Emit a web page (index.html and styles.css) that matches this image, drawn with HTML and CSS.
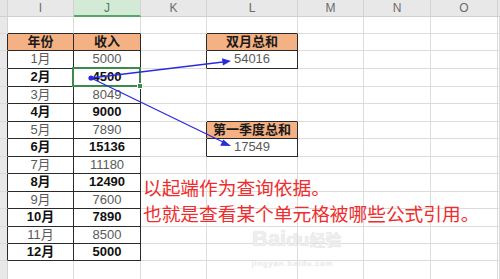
FILE: index.html
```html
<!DOCTYPE html>
<html lang="zh">
<head>
<meta charset="utf-8">
<title>追踪从属单元格</title>
<link rel="stylesheet" href="styles.css">
</head>
<body>
<div class="page">
<div class="sheet">
  <!-- column header row -->
  <div class="ch corner"></div>
  <div class="ch">I</div>
  <div class="ch sel">J</div>
  <div class="ch">K</div>
  <div class="ch">L</div>
  <div class="ch">M</div>
  <div class="ch">N</div>
  <div class="ch">O</div>
  <div class="ch last"></div>

  <!-- row 1 -->
  <div class="rh"></div><div class="c d"></div><div class="c d"></div><div class="c"></div><div class="c d"></div><div class="c"></div><div class="c"></div><div class="c"></div><div class="c"></div>
  <!-- row 2 -->
  <div class="rh r"></div><div class="c t r d hd">年份</div><div class="c t r d hd">收入</div><div class="c r"></div><div class="c r d hd">双月总和</div><div class="c"></div><div class="c"></div><div class="c"></div><div class="c"></div>
  <!-- row 3 -->
  <div class="rh r"></div><div class="c t r d">1月</div><div class="c t r d">5000</div><div class="c r"></div><div class="c r d">54016</div><div class="c"></div><div class="c"></div><div class="c"></div><div class="c"></div>
  <!-- row 4 -->
  <div class="rh r"></div><div class="c t r d b">2月</div><div class="c t r d b active">4500<span class="handle"></span></div><div class="c"></div><div class="c"></div><div class="c"></div><div class="c"></div><div class="c"></div><div class="c"></div>
  <!-- row 5 -->
  <div class="rh r"></div><div class="c t r d">3月</div><div class="c t r d">8049</div><div class="c"></div><div class="c"></div><div class="c"></div><div class="c"></div><div class="c"></div><div class="c"></div>
  <!-- row 6 -->
  <div class="rh r"></div><div class="c t r d b">4月</div><div class="c t r d b">9000</div><div class="c"></div><div class="c d"></div><div class="c"></div><div class="c"></div><div class="c"></div><div class="c"></div>
  <!-- row 7 -->
  <div class="rh r"></div><div class="c t r d">5月</div><div class="c t r d">7890</div><div class="c r"></div><div class="c r d hd">第一季度总和</div><div class="c"></div><div class="c"></div><div class="c"></div><div class="c"></div>
  <!-- row 8 -->
  <div class="rh r"></div><div class="c t r d b">6月</div><div class="c t r d b">15136</div><div class="c r"></div><div class="c r d">17549</div><div class="c"></div><div class="c"></div><div class="c"></div><div class="c"></div>
  <!-- row 9 -->
  <div class="rh r"></div><div class="c t r d">7月</div><div class="c t r d">11180</div><div class="c"></div><div class="c"></div><div class="c"></div><div class="c"></div><div class="c"></div><div class="c"></div>
  <!-- row 10 -->
  <div class="rh r"></div><div class="c t r d b">8月</div><div class="c t r d b">12490</div><div class="c"></div><div class="c"></div><div class="c"></div><div class="c"></div><div class="c"></div><div class="c"></div>
  <!-- row 11 -->
  <div class="rh r"></div><div class="c t r d">9月</div><div class="c t r d">7600</div><div class="c"></div><div class="c"></div><div class="c"></div><div class="c"></div><div class="c"></div><div class="c"></div>
  <!-- row 12 -->
  <div class="rh r"></div><div class="c t r d b">10月</div><div class="c t r d b">7890</div><div class="c"></div><div class="c"></div><div class="c"></div><div class="c"></div><div class="c"></div><div class="c"></div>
  <!-- row 13 -->
  <div class="rh r"></div><div class="c t r d">11月</div><div class="c t r d">8500</div><div class="c"></div><div class="c"></div><div class="c"></div><div class="c"></div><div class="c"></div><div class="c"></div>
  <!-- row 14 -->
  <div class="rh r"></div><div class="c t r d b">12月</div><div class="c t r d b">5000</div><div class="c"></div><div class="c"></div><div class="c"></div><div class="c"></div><div class="c"></div><div class="c"></div>
  <!-- row 15 -->
  <div class="rh"></div><div class="c"></div><div class="c"></div><div class="c"></div><div class="c"></div><div class="c"></div><div class="c"></div><div class="c"></div><div class="c"></div>
</div>

<div class="overlay">
  <div class="note">以起端作为查询依据。<br>也就是查看某个单元格被哪些公式引用。</div>
  <div class="watermark">
    <div class="wm-logo"><span class="wm-bai">Bai</span><span class="wm-paw">du</span><span class="wm-jy">经验</span></div>
    <div class="wm-url">jingyan.baidu.com</div>
  </div>
</div>
</div>

<svg class="arrows" width="500" height="279" viewBox="0 0 500 279" aria-hidden="true">
  <g stroke="#2b2bdc" stroke-width="1.3" fill="none">
    <line x1="91" y1="78" x2="223" y2="62"/>
    <line x1="91" y1="78" x2="223" y2="142"/>
  </g>
  <g fill="#2b2bdc">
    <circle cx="91" cy="78" r="2.6"/>
    <polygon points="231,61 222,58.2 222.9,65.4"/>
    <polygon points="231,146 223.3,139.4 220.2,145.8"/>
  </g>
</svg>
</body>
</html>
```

FILE: styles.css
```css
html, body {
  margin: 0;
  padding: 0;
  background: #ffffff;
}

body {
  width: 500px;
  height: 279px;
  overflow: hidden;
  position: relative;
  font-family: "Liberation Sans", "Noto Sans CJK SC", sans-serif;
}

.page {
  display: grid;
  width: 500px;
  height: 279px;
  overflow: hidden;
}

.sheet,
.overlay {
  grid-area: 1 / 1;
  display: grid;
  grid-template-columns: 8px 66px 67px 66px 91px 66px 67px 67px 1fr;
  grid-template-rows: 17px 17px 17px 18px 18px 17px 18px 17px 18px 17px 18px 17px 18px 17px 17px 19px;
  width: 500px;
}

.overlay {
  z-index: 2;
  pointer-events: none;
}

.sheet > div {
  box-sizing: border-box;
}

/* column headers */
.ch {
  background: #e8e8e8;
  border-right: 1px solid #d2d2d2;
  border-bottom: 1px solid #cfcfcf;
  color: #6b6b6b;
  font-size: 12px;
  line-height: 16px;
  text-align: center;
}

.ch.corner {
  background: #e4e4e4;
}

.ch.last {
  border-right: none;
}

.ch.sel {
  background: #d3ebd6;
  border-bottom: 2px solid #55a864;
  color: #4f7f57;
}

/* row headers */
.rh {
  background: #e8e8e8;
  border-right: 1px solid #d2d2d2;
  border-bottom: 1px solid #dadada;
}

/* ordinary cells */
.c {
  border-right: 1px solid #dcdcdc;
  border-bottom: 1px solid #dcdcdc;
  font-size: 13px;
  line-height: 16px;
  text-align: center;
  color: #5a5a5a;
  white-space: nowrap;
}

.sheet > .r {
  border-right: 1px solid #2a2a2a;
}

.sheet > .d {
  border-bottom: 1px solid #2a2a2a;
}

.c.b {
  color: #111111;
  font-weight: bold;
}

.c.hd {
  background: #f4b183;
  color: #1a1a1a;
  font-weight: bold;
}

/* active cell */
.active {
  position: relative;
}

.active::before {
  content: "";
  position: absolute;
  left: -2px;
  top: -2px;
  right: -1px;
  bottom: -1px;
  border: 2px solid #3c8b4b;
}

.handle {
  position: absolute;
  right: -3px;
  bottom: -3px;
  width: 4px;
  height: 4px;
  background: #3c8b4b;
  border: 1px solid #ffffff;
}

/* red note spilling across cells */
.note {
  grid-column: 4 / span 5;
  grid-row: 11 / span 3;
  padding: 0 0 0 2px;
  color: #f02c2c;
  font-family: "Noto Sans CJK SC", sans-serif;
  font-size: 18.7px;
  line-height: 26px;
  white-space: nowrap;
}

/* faint watermark */
.watermark {
  grid-column: 5 / span 2;
  grid-row: 14 / span 3;
  padding: 0 0 0 45px;
  color: #eeeeee;
  text-shadow: 0 0 1px #d6d6d6;
  white-space: nowrap;
}

.wm-logo {
  line-height: 24px;
}

.wm-bai {
  font-family: "Liberation Sans", sans-serif;
  font-weight: bold;
  font-size: 22px;
}

.wm-paw {
  font-family: "Liberation Sans", sans-serif;
  font-weight: bold;
  font-size: 19px;
}

.wm-jy {
  font-family: "Noto Sans CJK SC", sans-serif;
  font-size: 16px;
  font-weight: bold;
}

.wm-url {
  font-size: 8px;
  line-height: 12px;
  letter-spacing: 1px;
  margin-top: 5px;
}

/* trace arrows overlay */
.arrows {
  position: absolute;
  left: 0;
  top: 0;
  z-index: 3;
}
```
